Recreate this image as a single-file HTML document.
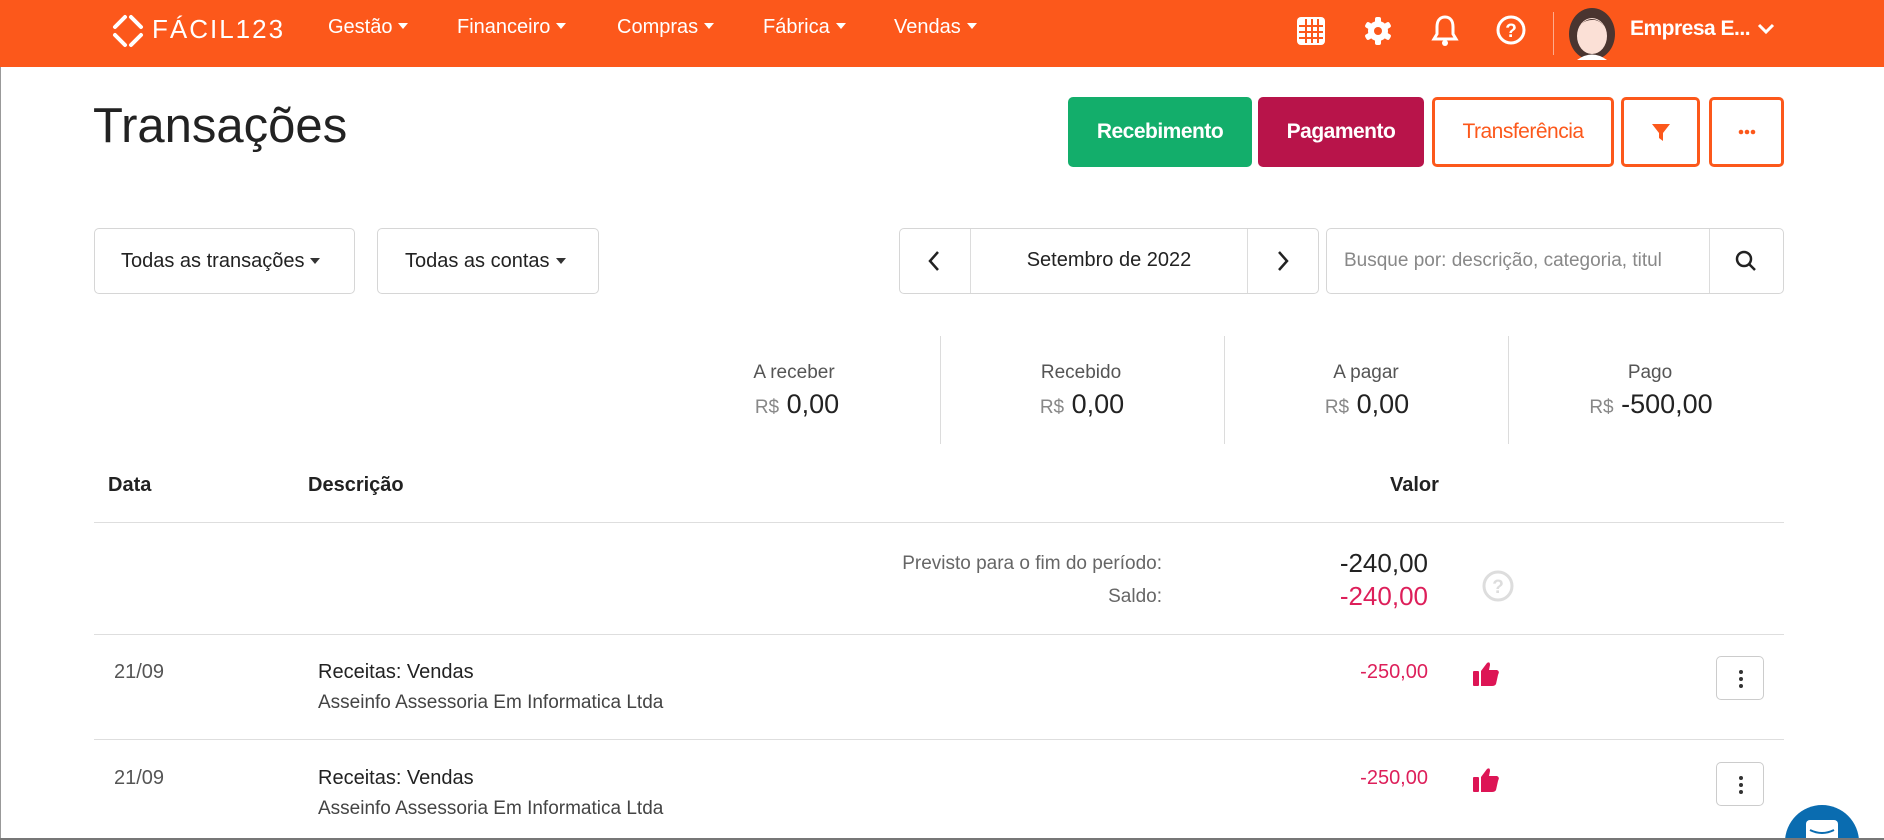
<!DOCTYPE html>
<html style="width:1884px;height:840px;overflow:hidden"><head><meta charset="utf-8"><style>
*{box-sizing:border-box;margin:0;padding:0}
body{width:1884px;height:840px;overflow:hidden;background:#fff;font-family:"Liberation Sans",sans-serif;color:#222;position:relative}
.a{position:absolute;white-space:nowrap}
.nav{position:absolute;left:0;top:0;width:1884px;height:67px;background:#fc581b}
.ni{position:absolute;top:16px;color:#fff;font-size:20px}
.ni:after{content:"";display:inline-block;margin-left:6px;vertical-align:4px;border-left:5px solid transparent;border-right:5px solid transparent;border-top:6px solid #fff}
.btn{position:absolute;top:97px;height:70px;border-radius:5px;font-size:21px;display:flex;align-items:center;justify-content:center;font-weight:bold;letter-spacing:-0.5px}
.ob{border:3px solid #fc581b;color:#fc581b;background:#fff;font-weight:normal}
.box{position:absolute;border:1px solid #d6d6d6;border-radius:5px;top:228px;height:66px;font-size:20px;display:flex;align-items:center}
.dd:after{content:"";display:inline-block;margin-left:6px;vertical-align:4px;border-left:5px solid transparent;border-right:5px solid transparent;border-top:6px solid #333}
.sep{position:absolute;width:1px;background:#dcdcdc}
.lbl{position:absolute;top:362px;font-size:19px;color:#555;text-align:center;width:230px}
.val{position:absolute;top:389px;font-size:27px;color:#222;text-align:center;width:230px}
.val small{font-size:19px;color:#888}
.hl{position:absolute;left:94px;width:1690px;height:1px;background:#dedede}
.kb{position:absolute;left:1716px;width:48px;height:44px;border:1px solid #ccc;border-radius:5px}
.kb i{position:absolute;left:22px;width:4px;height:4px;border-radius:2px;background:#333}
</style></head><body>
<div class="nav">
<svg class="a" style="left:110px;top:13px" width="36" height="36" viewBox="0 0 36 36"><g fill="none" stroke="#fff" stroke-width="4" stroke-linecap="round"><path d="M15 4 L5 14"/><path d="M21 4 L31 14"/><path d="M5 22 L15 32"/><path d="M31 22 L21 32"/></g></svg>
<div class="a" style="left:152px;top:14px;color:#fff;font-size:26px;letter-spacing:2px">FÁCIL123</div>
<div class="ni" style="left:328px">Gestão</div>
<div class="ni" style="left:457px">Financeiro</div>
<div class="ni" style="left:617px">Compras</div>
<div class="ni" style="left:763px">Fábrica</div>
<div class="ni" style="left:894px">Vendas</div>
<svg class="a" style="left:1296px;top:16px" width="30" height="30" viewBox="0 0 30 30"><rect x="1" y="1" width="28" height="28" rx="4" fill="#fff"/><g fill="#fc581b"><rect x="9" y="3" width="2" height="24"/><rect x="15" y="3" width="2" height="24"/><rect x="21" y="3" width="2" height="24"/><rect x="3" y="9" width="24" height="2"/><rect x="3" y="15" width="24" height="2"/><rect x="3" y="21" width="24" height="2"/></g></svg>
<svg class="a" style="left:1362px;top:15px" width="32" height="32" viewBox="0 0 32 32"><g fill="#fff"><circle cx="16" cy="16" r="10"/><rect x="13" y="2" width="6" height="28" rx="2"/><rect x="13" y="2" width="6" height="28" rx="2" transform="rotate(60 16 16)"/><rect x="13" y="2" width="6" height="28" rx="2" transform="rotate(120 16 16)"/></g><circle cx="16" cy="16" r="4" fill="#fc581b"/></svg>
<svg class="a" style="left:1431px;top:14px" width="28" height="34" viewBox="0 0 28 34"><path d="M14 3 C8 3 6 8 6 13 V20 L3 25 H25 L22 20 V13 C22 8 20 3 14 3Z" fill="none" stroke="#fff" stroke-width="3"/><circle cx="14" cy="29" r="3" fill="#fff"/></svg>
<svg class="a" style="left:1495px;top:14px" width="32" height="32" viewBox="0 0 32 32"><circle cx="16" cy="16" r="13" fill="none" stroke="#fff" stroke-width="3"/><text x="16" y="23" font-size="19" font-weight="bold" fill="#fff" text-anchor="middle" font-family="Liberation Sans">?</text></svg>
<div class="a" style="left:1553px;top:12px;width:1px;height:43px;background:rgba(255,255,255,.5)"></div>
<svg class="a" style="left:1569px;top:7px" width="46" height="53" viewBox="0 0 46 53"><ellipse cx="23" cy="27" rx="23" ry="26" fill="#4a3530"/><ellipse cx="23" cy="29" rx="15" ry="18" fill="#fbe0d6"/><path d="M8 22 Q23 2 38 22 Q30 12 23 13 Q14 13 8 22Z" fill="#4a3530"/><path d="M8 53 Q23 42 38 53Z" fill="#fff"/></svg>
<div class="a" style="left:1630px;top:17px;color:#fff;font-size:21px;font-weight:bold;letter-spacing:-0.5px">Empresa E...</div>
<svg class="a" style="left:1757px;top:22px" width="18" height="14" viewBox="0 0 18 14"><path d="M2 3 L9 10 L16 3" fill="none" stroke="#fff" stroke-width="3"/></svg>
</div>
<div class="a" style="left:0;top:67px;width:1px;height:773px;background:#999"></div>
<div class="a" style="left:93px;top:98px;font-size:49px;color:#222">Transações</div>
<div class="btn" style="left:1068px;width:184px;background:#13ae6b;color:#fff">Recebimento</div>
<div class="btn" style="left:1258px;width:166px;background:#b8144a;color:#fff">Pagamento</div>
<div class="btn ob" style="left:1432px;width:182px">Transferência</div>
<div class="btn ob" style="left:1621px;width:79px"><svg width="20" height="20" viewBox="0 0 20 20"><path d="M1 2 H19 L12 11 V19 L8 16 V11Z" fill="#fc581b"/></svg></div>
<div class="btn ob" style="left:1709px;width:75px"><svg width="18" height="6" viewBox="0 0 18 6"><circle cx="3" cy="3" r="2.3" fill="#fc581b"/><circle cx="9" cy="3" r="2.3" fill="#fc581b"/><circle cx="15" cy="3" r="2.3" fill="#fc581b"/></svg></div>
<div class="box dd" style="left:94px;width:261px;padding-left:26px">Todas as transações</div>
<div class="box dd" style="left:377px;width:222px;padding-left:27px">Todas as contas</div>
<div class="box" style="left:899px;width:420px"></div>
<div class="sep" style="left:970px;top:229px;height:64px"></div>
<div class="sep" style="left:1247px;top:229px;height:64px"></div>
<svg class="a" style="left:927px;top:250px" width="14" height="22" viewBox="0 0 14 22"><path d="M11 2 L3 11 L11 20" fill="none" stroke="#222" stroke-width="2.5"/></svg>
<svg class="a" style="left:1276px;top:250px" width="14" height="22" viewBox="0 0 14 22"><path d="M3 2 L11 11 L3 20" fill="none" stroke="#222" stroke-width="2.5"/></svg>
<div class="a" style="left:971px;width:276px;top:249px;text-align:center;font-size:20px">Setembro de 2022</div>
<div class="box" style="left:1326px;width:458px;padding-left:17px;color:#888;font-size:19px">Busque por: descrição, categoria, titul</div>
<div class="sep" style="left:1709px;top:229px;height:64px"></div>
<svg class="a" style="left:1735px;top:250px" width="22" height="22" viewBox="0 0 22 22"><circle cx="9" cy="9" r="7" fill="none" stroke="#222" stroke-width="2.5"/><path d="M14 14 L20 20" stroke="#222" stroke-width="2.5"/></svg>
<div class="sep" style="left:940px;top:336px;height:108px"></div>
<div class="sep" style="left:1224px;top:336px;height:108px"></div>
<div class="sep" style="left:1508px;top:336px;height:108px"></div>
<div class="lbl" style="left:679px">A receber</div><div class="val" style="left:682px"><small>R$</small> 0,00</div>
<div class="lbl" style="left:966px">Recebido</div><div class="val" style="left:967px"><small>R$</small> 0,00</div>
<div class="lbl" style="left:1251px">A pagar</div><div class="val" style="left:1252px"><small>R$</small> 0,00</div>
<div class="lbl" style="left:1535px">Pago</div><div class="val" style="left:1536px"><small>R$</small> -500,00</div>
<div class="a" style="left:108px;top:474px;font-size:20px;font-weight:bold">Data</div>
<div class="a" style="left:308px;top:474px;font-size:20px;font-weight:bold">Descrição</div>
<div class="a" style="left:1390px;top:474px;font-size:20px;font-weight:bold">Valor</div>
<div class="hl" style="top:522px"></div>
<div class="a" style="right:722px;top:553px;font-size:19px;color:#666">Previsto para o fim do período:</div>
<div class="a" style="right:722px;top:586px;font-size:19px;color:#666">Saldo:</div>
<div class="a" style="right:456px;top:548px;font-size:26px;color:#222">-240,00</div>
<div class="a" style="right:456px;top:581px;font-size:26px;color:#dd1f5a">-240,00</div>
<svg class="a" style="left:1481px;top:569px" width="34" height="34" viewBox="0 0 34 34"><circle cx="17" cy="17" r="14" fill="none" stroke="#ddd" stroke-width="3"/><text x="17" y="24" font-size="19" font-weight="bold" fill="#ddd" text-anchor="middle" font-family="Liberation Sans">?</text></svg>
<div class="hl" style="top:634px"></div>
<div class="hl" style="top:739px"></div>

<div class="a" style="left:114px;top:661px;font-size:20px;color:#555">21/09</div>
<div class="a" style="left:318px;top:661px;font-size:20px">Receitas: Vendas</div>
<div class="a" style="left:318px;top:692px;font-size:19px;color:#444">Asseinfo Assessoria Em Informatica Ltda</div>
<div class="a" style="right:456px;top:661px;font-size:20px;color:#dd1f5a">-250,00</div>
<svg class="a" style="left:1472px;top:661px" width="28" height="26" viewBox="0 0 28 26"><rect x="1" y="10" width="6" height="15" rx="1" fill="#dd1555"/><path d="M9 10 L15 2 Q18 0 18 4 L17 9 H25 Q28 10 26 14 L24 23 Q23 25 20 25 H9Z" fill="#dd1555"/></svg>
<div class="kb" style="top:656px"><i style="top:13px"></i><i style="top:20px"></i><i style="top:27px"></i></div>

<div class="a" style="left:114px;top:767px;font-size:20px;color:#555">21/09</div>
<div class="a" style="left:318px;top:767px;font-size:20px">Receitas: Vendas</div>
<div class="a" style="left:318px;top:798px;font-size:19px;color:#444">Asseinfo Assessoria Em Informatica Ltda</div>
<div class="a" style="right:456px;top:767px;font-size:20px;color:#dd1f5a">-250,00</div>
<svg class="a" style="left:1472px;top:767px" width="28" height="26" viewBox="0 0 28 26"><rect x="1" y="10" width="6" height="15" rx="1" fill="#dd1555"/><path d="M9 10 L15 2 Q18 0 18 4 L17 9 H25 Q28 10 26 14 L24 23 Q23 25 20 25 H9Z" fill="#dd1555"/></svg>
<div class="kb" style="top:762px"><i style="top:13px"></i><i style="top:20px"></i><i style="top:27px"></i></div>

<svg class="a" style="left:1780px;top:800px" width="84" height="38" viewBox="0 0 84 38"><circle cx="42" cy="42" r="37" fill="#0a6cb0"/><rect x="26" y="20" width="32" height="30" rx="4" fill="#fff"/><path d="M30 30 Q42 36 54 30" fill="none" stroke="#0a6cb0" stroke-width="2"/></svg>
<div class="a" style="left:0;top:838px;width:1884px;height:2px;background:#777"></div>
</body></html>
